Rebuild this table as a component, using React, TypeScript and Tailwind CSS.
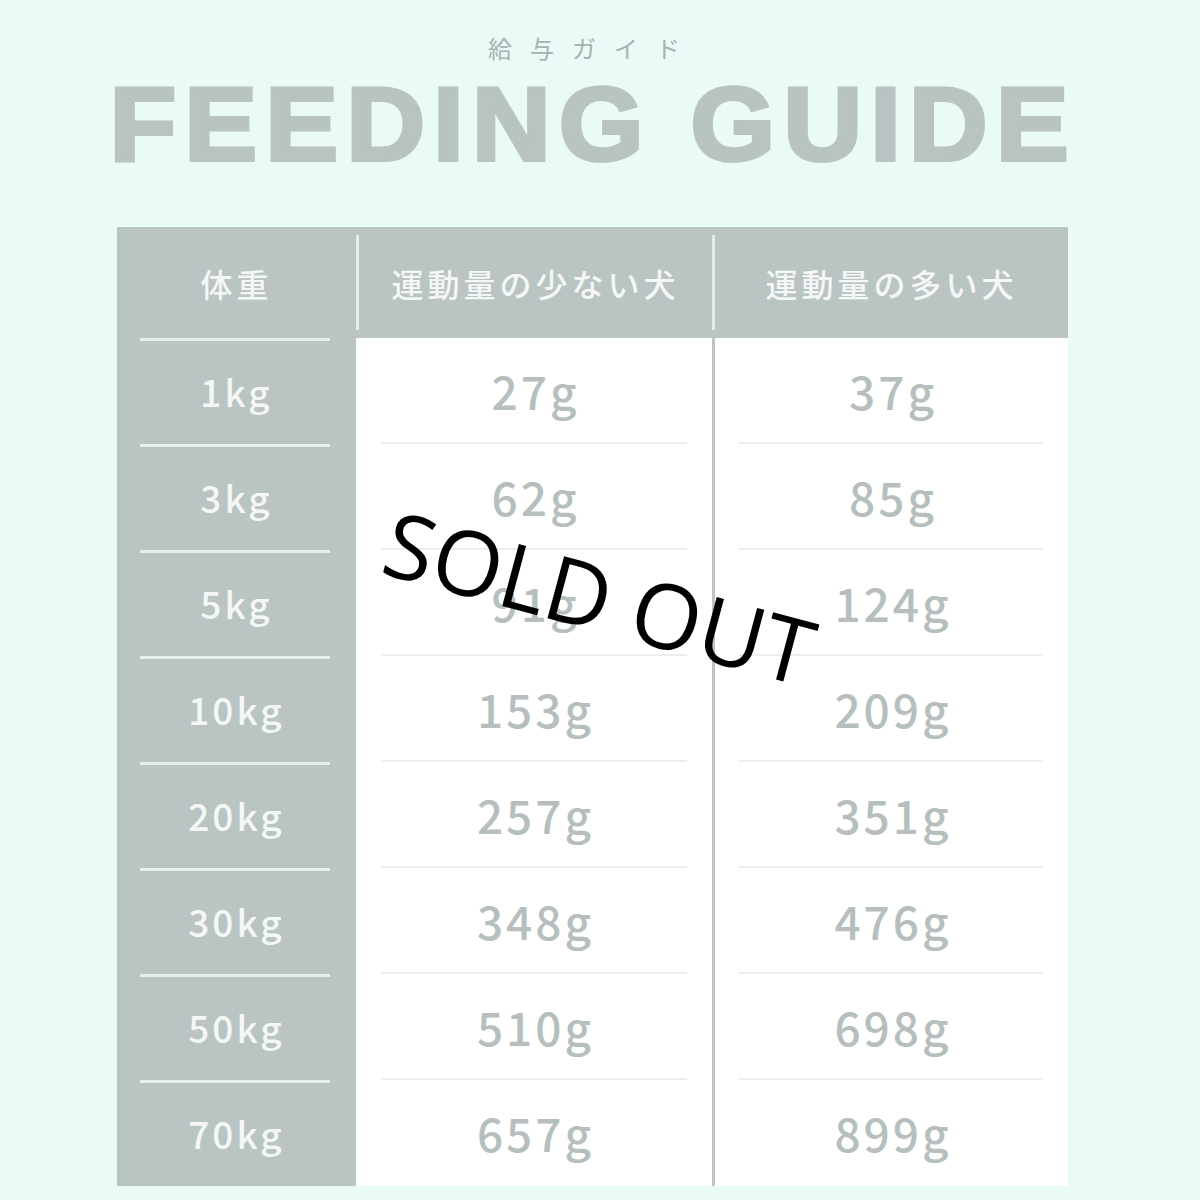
const rows = [
  { w: "1kg", low: "27g", high: "37g" },
  { w: "3kg", low: "62g", high: "85g" },
  { w: "5kg", low: "91g", high: "124g" },
  { w: "10kg", low: "153g", high: "209g" },
  { w: "20kg", low: "257g", high: "351g" },
  { w: "30kg", low: "348g", high: "476g" },
  { w: "50kg", low: "510g", high: "698g" },
  { w: "70kg", low: "657g", high: "899g" },
];

const jp = "font-['Noto_Sans_CJK_JP','Noto_Sans',sans-serif]";

export default function App() {
  return (
    <div className="relative flex h-[1200px] w-[1200px] flex-col items-center bg-[#eafbf7] pt-[36px]">
      <p className={`${jp} mr-[14px] h-[24px] text-[24px] leading-none tracking-[18px] text-[#a7b1b0]`}>
        給与ガイド
      </p>
      <h1 className="mt-[13px] mr-[14px] scale-x-[1.055] font-['Liberation_Sans',Arial,sans-serif] text-[103px] font-bold leading-none tracking-[8px] text-[#b9c3c2] [-webkit-text-stroke:4px_#b9c3c2]">
        FEEDING GUIDE
      </h1>

      <div className={`${jp} mt-[51px] ml-[-15px] w-[951px]`}>
        {/* header */}
        <div className="grid h-[111px] grid-cols-[239px_356px_356px] bg-[#bac4c3] py-[8px] text-[32px] font-medium leading-none tracking-[4px] text-[#f4f7f6]">
          <div className="flex items-center justify-center">体重</div>
          <div className="flex items-center justify-center border-l-[3px] border-[#e6eceb]">運動量の少ない犬</div>
          <div className="flex items-center justify-center border-l-[3px] border-[#e6eceb]">運動量の多い犬</div>
        </div>

        {/* body */}
        {rows.map((r, i) => {
          const last = i === rows.length - 1;
          return (
            <div key={r.w} className="grid h-[106px] grid-cols-[239px_356px_356px]">
              <div className="flex flex-col bg-[#bac4c3]">
                <div className="ml-[23px] mr-[26px] h-[3px] bg-[#e8eeed]" />
                <div className="flex flex-1 items-center justify-center pb-[3px] text-[37px] font-medium leading-none tracking-[3px] text-[#f4f7f6]">
                  {r.w}
                </div>
              </div>
              <div className="flex flex-col bg-white">
                <div className="flex flex-1 items-center justify-center pl-[3px] text-[46px] font-medium leading-none tracking-[3px] text-[#b7bfbe]">
                  {r.low}
                </div>
                <div className={`mx-[25px] h-[2px] ${last ? "bg-transparent" : "bg-[#ededed]"}`} />
              </div>
              <div className="flex flex-col border-l-[3px] border-[#bcc5c4] bg-white">
                <div className="flex flex-1 items-center justify-center pl-[3px] text-[46px] font-medium leading-none tracking-[3px] text-[#b7bfbe]">
                  {r.high}
                </div>
                <div className={`ml-[24px] mr-[25px] h-[2px] ${last ? "bg-transparent" : "bg-[#ededed]"}`} />
              </div>
            </div>
          );
        })}
      </div>

      <div className="absolute left-[600px] top-[596px] -translate-x-1/2 -translate-y-1/2 rotate-[15deg] whitespace-nowrap font-['Open_Sans',sans-serif] text-[90px] font-normal leading-none text-black">
        SOLD OUT
      </div>
    </div>
  );
}
